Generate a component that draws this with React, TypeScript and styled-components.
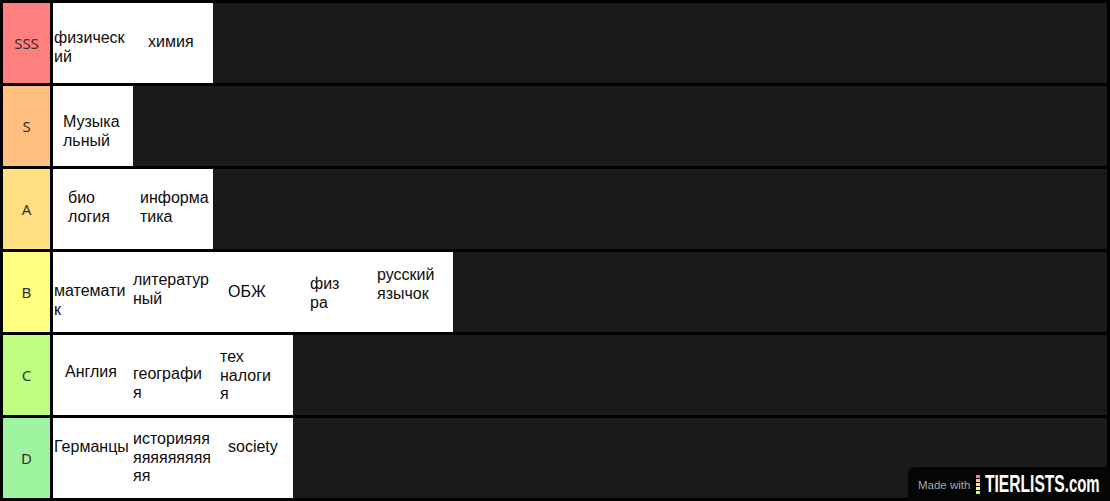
import React from 'react';
import styled, { createGlobalStyle } from 'styled-components';

type Item = { lines: string[]; dx: number; dy: number };
type Tier = { label: string; color: string; items: Item[] };

const tiers: Tier[] = [
  {
    label: 'SSS',
    color: '#ff7f7f',
    items: [
      { lines: ['физическ', 'ий'], dx: 1, dy: 26 },
      { lines: ['химия'], dx: 15, dy: 30 },
    ],
  },
  {
    label: 'S',
    color: '#ffbf80',
    items: [{ lines: ['Музыка', 'льный'], dx: 10, dy: 27 }],
  },
  {
    label: 'A',
    color: '#ffdf80',
    items: [
      { lines: ['био', 'логия'], dx: 15, dy: 20 },
      { lines: ['информа', 'тика'], dx: 7, dy: 20 },
    ],
  },
  {
    label: 'B',
    color: '#ffff7f',
    items: [
      { lines: ['математи', 'к'], dx: 1, dy: 30 },
      { lines: ['литератур', 'ный'], dx: 0, dy: 19 },
      { lines: ['ОБЖ'], dx: 15, dy: 31 },
      { lines: ['физ', 'ра'], dx: 17, dy: 23 },
      { lines: ['русский', 'язычок'], dx: 4, dy: 14 },
    ],
  },
  {
    label: 'C',
    color: '#bfff7f',
    items: [
      { lines: ['Англия'], dx: 12, dy: 28 },
      { lines: ['географи', 'я'], dx: 0, dy: 30 },
      { lines: ['тех', 'налоги', 'я'], dx: 7, dy: 13 },
    ],
  },
  {
    label: 'D',
    color: '#9ff59f',
    items: [
      { lines: ['Германцы'], dx: 1, dy: 20 },
      { lines: ['историяяя', 'яяяяяяяяя', 'яя'], dx: 0, dy: 12 },
      { lines: ['society'], dx: 15, dy: 20 },
    ],
  },
];

const stripes = ['#ff7f7f', '#ffbf7f', '#ffdf7f', '#ffff7f', '#bfff7f'];

const GlobalStyle = createGlobalStyle`
  html, body {
    margin: 0;
    padding: 0;
    background: #000;
  }
`;

const Board = styled.div`
  position: relative;
  box-sizing: border-box;
  width: 1110px;
  height: 501px;
  padding: 3px;
  background: #000;
  display: flex;
  flex-direction: column;
  gap: 3px;
  overflow: hidden;
`;

const Row = styled.div`
  display: flex;
  gap: 3px;
  height: 80px;
`;

const Label = styled.div<{ $color: string }>`
  width: 47px;
  flex-shrink: 0;
  background: ${(p) => p.$color};
  display: flex;
  align-items: center;
  justify-content: center;
  font-family: 'Noto Sans', 'Liberation Sans', sans-serif;
  font-size: 15px;
  color: #333;
`;

const Items = styled.div`
  flex: 1;
  display: flex;
  background: #1a1a1a;
`;

const Card = styled.div<{ $dx: number; $dy: number }>`
  box-sizing: border-box;
  width: 80px;
  height: 80px;
  flex-shrink: 0;
  background: #fff;
  padding-left: ${(p) => p.$dx}px;
  padding-top: ${(p) => p.$dy}px;
  font-family: 'Liberation Sans', Arial, sans-serif;
  font-size: 16px;
  line-height: 18.5px;
  color: #0d0d0d;
  white-space: nowrap;
`;

const Watermark = styled.div`
  position: absolute;
  right: 0;
  bottom: 0;
  width: 202px;
  height: 34px;
  box-sizing: border-box;
  padding-left: 10px;
  background: #050505;
  border-top-left-radius: 6px;
  display: flex;
  align-items: center;
`;

const MadeWith = styled.span`
  font-family: 'Liberation Sans', Arial, sans-serif;
  font-size: 11.5px;
  color: #a8a8a8;
  margin-right: 6px;
  margin-top: 1px;
`;

const Stripe = styled.div`
  display: flex;
  flex-direction: column;
  gap: 1px;
  margin-right: 5px;
  margin-top: 1px;
`;

const Dot = styled.span<{ $color: string }>`
  display: block;
  width: 4px;
  height: 3px;
  background: ${(p) => p.$color};
`;

const BrandBox = styled.span`
  display: inline-block;
  width: 116px;
  height: 28px;
  overflow: visible;
`;

const Brand = styled.span`
  display: inline-block;
  font-family: 'Liberation Sans', Arial, sans-serif;
  font-weight: 700;
  font-size: 24px;
  line-height: 28px;
  color: #fff;
  white-space: nowrap;
  transform: scaleX(0.65);
  transform-origin: left center;
`;

const Com = styled.span`
  font-size: 23px;
`;

export default function App() {
  return (
    <>
      <GlobalStyle />
      <Board>
        {tiers.map((t) => (
          <Row key={t.label}>
            <Label $color={t.color}>{t.label}</Label>
            <Items>
              {t.items.map((it, i) => (
                <Card key={i} $dx={it.dx} $dy={it.dy}>
                  {it.lines.map((l, j) => (
                    <div key={j}>{l}</div>
                  ))}
                </Card>
              ))}
            </Items>
          </Row>
        ))}
        <Watermark>
          <MadeWith>Made with</MadeWith>
          <Stripe>
            {stripes.map((c) => (
              <Dot key={c} $color={c} />
            ))}
          </Stripe>
          <BrandBox>
            <Brand>
              TIERLISTS<Com>.com</Com>
            </Brand>
          </BrandBox>
        </Watermark>
      </Board>
    </>
  );
}
